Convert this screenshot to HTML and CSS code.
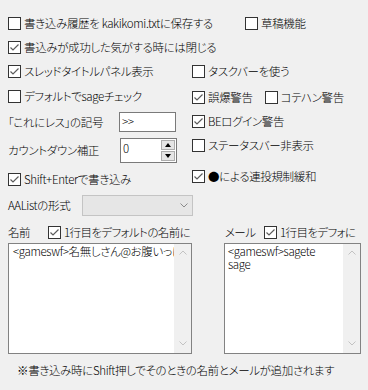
FILE: index.html
```html
<!DOCTYPE html>
<html lang="ja">
  <head>
    <meta charset="UTF-8" />
    <title>書き込み設定</title>
    <link rel="stylesheet" href="styles.css">
  </head>
  <body>
    <div class="panel">
      <div class="row">
        <label class="chk history"><span class="box"></span>書き込み履歴を kakikomi.txtに保存する</label>
        <label class="chk"><span class="box"></span>草稿機能</label>
      </div>
      <div class="row">
        <label class="chk"><span class="box"><svg width="11" height="11" viewBox="0 0 11 11"><path d="M1.5 5.5 L4 8 L9.5 2.5" /></svg></span>書込みが成功した気がする時には閉じる</label>
      </div>

      <div class="cols">
        <div class="col left">
          <div class="item h24">
            <label class="chk"><span class="box"><svg width="11" height="11" viewBox="0 0 11 11"><path d="M1.5 5.5 L4 8 L9.5 2.5" /></svg></span>スレッドタイトルパネル表示</label>
          </div>
          <div class="item h26">
            <label class="chk"><span class="box"></span>デフォルトでsageチェック</label>
          </div>
          <div class="item h26">
            <span class="lbl">「これにレス」の記号</span>
            <span class="textbox">&gt;&gt;</span>
          </div>
          <div class="item h30">
            <span class="lbl">カウントダウン補正</span>
            <span class="spin">
              <span class="spin-val">0</span>
              <span class="spin-btns">
                <span class="spin-btn"><span class="tri up"></span></span>
                <span class="spin-btn"><span class="tri down"></span></span>
              </span>
            </span>
          </div>
          <div class="item h28">
            <label class="chk"><span class="box"><svg width="11" height="11" viewBox="0 0 11 11"><path d="M1.5 5.5 L4 8 L9.5 2.5" /></svg></span>Shift+Enterで書き込み</label>
          </div>
        </div>

        <div class="col right">
          <div class="item h24">
            <label class="chk"><span class="box"></span>タスクバーを使う</label>
          </div>
          <div class="item h28">
            <label class="chk"><span class="box"><svg width="11" height="11" viewBox="0 0 11 11"><path d="M1.5 5.5 L4 8 L9.5 2.5" /></svg></span>誤爆警告</label>
            <label class="chk kotehan"><span class="box"></span>コテハン警告</label>
          </div>
          <div class="item h20">
            <label class="chk"><span class="box"><svg width="11" height="11" viewBox="0 0 11 11"><path d="M1.5 5.5 L4 8 L9.5 2.5" /></svg></span>BEログイン警告</label>
          </div>
          <div class="item h28">
            <label class="chk"><span class="box"></span>ステータスバー非表示</label>
          </div>
          <div class="item h34">
            <label class="chk"><span class="box"><svg width="11" height="11" viewBox="0 0 11 11"><path d="M1.5 5.5 L4 8 L9.5 2.5" /></svg></span>●による連投規制緩和</label>
          </div>
        </div>
      </div>

      <div class="row aalist">
        <span class="lbl-aa">AAListの形式</span>
        <span class="combo">
          <svg width="8" height="5" viewBox="0 0 8 5"><path d="M0.5 0.5 L4 4 L7.5 0.5" /></svg>
        </span>
      </div>

      <div class="edits">
        <div class="field name">
          <div class="field-head">
            <span class="head-lbl">名前</span>
            <label class="chk"><span class="box"><svg width="11" height="11" viewBox="0 0 11 11"><path d="M1.5 5.5 L4 8 L9.5 2.5" /></svg></span>1行目をデフォルトの名前に</label>
          </div>
          <div class="memo">
            <div class="memo-text">&lt;gameswf&gt;名無しさん@お腹いっぱい。</div>
            <div class="scroll">
              <svg width="8" height="5" viewBox="0 0 8 5"><path d="M0.5 4.5 L4 1 L7.5 4.5" /></svg>
              <svg width="8" height="5" viewBox="0 0 8 5"><path d="M0.5 0.5 L4 4 L7.5 0.5" /></svg>
            </div>
          </div>
        </div>
        <div class="field mail">
          <div class="field-head">
            <span class="head-lbl">メール</span>
            <label class="chk"><span class="box"><svg width="11" height="11" viewBox="0 0 11 11"><path d="M1.5 5.5 L4 8 L9.5 2.5" /></svg></span>1行目をデフォに</label>
          </div>
          <div class="memo">
            <div class="memo-text">&lt;gameswf&gt;sagete<br>sage</div>
            <div class="scroll">
              <svg width="8" height="5" viewBox="0 0 8 5"><path d="M0.5 4.5 L4 1 L7.5 4.5" /></svg>
              <svg width="8" height="5" viewBox="0 0 8 5"><path d="M0.5 0.5 L4 4 L7.5 0.5" /></svg>
            </div>
          </div>
        </div>
      </div>

      <p class="note">※書き込み時にShift押しでそのときの名前とメールが追加されます</p>
    </div>
  </body>
</html>
```

FILE: styles.css
```css
body {
  margin: 0;
  background-color: #f0f0f0;
  font-family: "Noto Sans CJK JP", "Noto Sans", sans-serif;
  font-size: 11.5px;
  font-weight: 300;
  line-height: 16px;
  letter-spacing: -0.35px;
  color: #000;
  font-feature-settings: "palt";
}

.panel {
  width: 368px;
  box-sizing: border-box;
  padding: 11px 7px 0 8px;
}

.row {
  display: flex;
  align-items: center;
  height: 24px;
}

.chk {
  display: flex;
  align-items: center;
  gap: 3px;
  white-space: nowrap;
}
.history {
  width: 237px;
}

.box {
  width: 13px;
  height: 13px;
  box-sizing: border-box;
  border: 1px solid #333;
  background-color: #fff;
  flex: none;
}
.box svg {
  display: block;
}
.box path {
  fill: none;
  stroke: #5c5c5c;
  stroke-width: 1.2;
}

/* two option columns */
.cols {
  display: flex;
}
.col {
  display: flex;
  flex-direction: column;
}
.left {
  width: 184px;
}
.item {
  display: flex;
  align-items: center;
}
.h20 { height: 20px; }
.h24 { height: 24px; }
.h26 { height: 26px; }
.h28 { height: 28px; }
.h30 { height: 30px; }
.h34 { height: 34px; }

.kotehan {
  margin-left: 12px;
}

.lbl {
  width: 111px;
  white-space: nowrap;
}

.textbox {
  width: 57px;
  height: 20px;
  box-sizing: border-box;
  border: 1px solid #7a7a7a;
  background-color: #fff;
  padding: 0 2px;
  line-height: 17px;
}

.spin {
  display: flex;
  align-items: center;
  width: 57px;
  height: 25px;
  margin-left: 1px;
  box-sizing: border-box;
  border: 1px solid #7a7a7a;
  background-color: #fff;
  padding: 0 1px 0 2px;
}
.spin-val {
  flex: 1;
  line-height: 16px;
  align-self: flex-start;
  padding-top: 1px;
}
.spin-btns {
  display: flex;
  flex-direction: column;
  gap: 1px;
}
.spin-btn {
  width: 14px;
  height: 10px;
  box-sizing: border-box;
  border: 1px solid #adadad;
  background-color: #e5e5e5;
  display: flex;
  align-items: center;
  justify-content: center;
}
.tri {
  width: 0;
  height: 0;
  border-left: 3px solid transparent;
  border-right: 3px solid transparent;
}
.tri.up {
  border-bottom: 4px solid #000;
}
.tri.down {
  border-top: 4px solid #000;
}

/* AA list */
.aalist {
  height: 24px;
}
.lbl-aa {
  width: 74px;
  white-space: nowrap;
}
.combo {
  width: 111px;
  height: 21px;
  box-sizing: border-box;
  border: 1px solid #c4c4c4;
  background-color: #e6e6e6;
  display: flex;
  align-items: center;
  justify-content: flex-end;
  padding-right: 4px;
}
.combo path,
.scroll path {
  fill: none;
  stroke: #8a8a8a;
  stroke-width: 1;
}

/* name / mail */
.edits {
  display: flex;
  gap: 32px;
  margin-top: 4px;
}
.field.name {
  width: 184px;
}
.field.mail {
  width: 137px;
}
.field-head {
  display: flex;
  align-items: center;
  height: 22px;
  white-space: nowrap;
  letter-spacing: -0.6px;
}
.name .head-lbl {
  width: 40px;
  flex: none;
}
.mail .head-lbl {
  width: 39px;
  flex: none;
  padding-left: 1px;
}

.memo {
  display: flex;
  height: 111px;
  box-sizing: border-box;
  border: 1px solid #828282;
  background-color: #fff;
}
.memo-text {
  flex: 1;
  min-width: 0;
  overflow: hidden;
  white-space: nowrap;
  padding: 1px 0 0 4px;
  line-height: 13px;
}
.mail .memo-text {
  padding-left: 3px;
}
.scroll {
  width: 17px;
  flex: none;
  background-color: #f0f0f0;
  display: flex;
  flex-direction: column;
  justify-content: space-between;
  align-items: center;
  padding: 6px 0 7px;
  box-sizing: border-box;
}
.scroll svg {
  display: block;
}
.scroll path {
  stroke: #c2c2c2;
}

.note {
  margin: 8px 0 0 9px;
  white-space: nowrap;
}
```
